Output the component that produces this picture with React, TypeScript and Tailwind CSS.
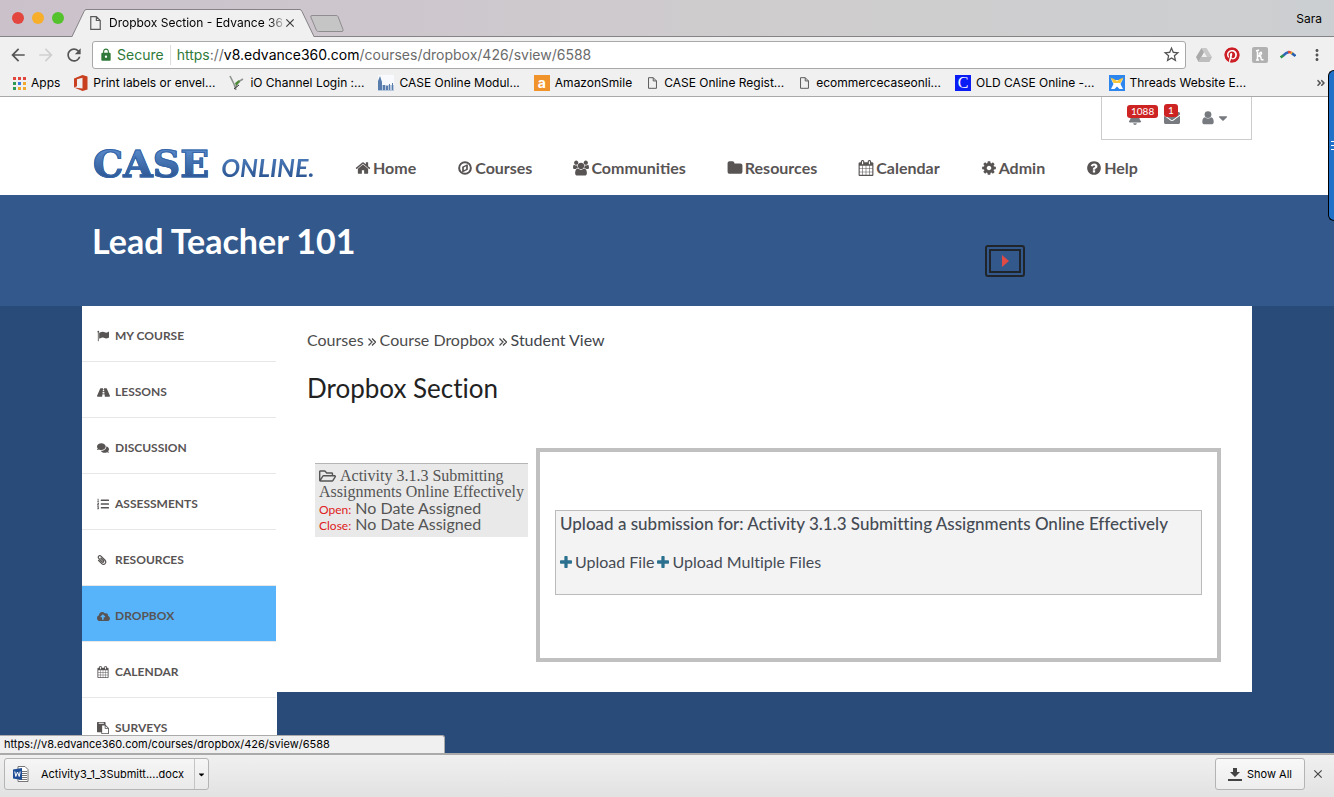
import type { ReactNode } from 'react'
import { clsx } from 'clsx'
import {
    FaAngleDoubleRight, FaBell, FaCaretDown, FaCloudUploadAlt, FaComments, FaEnvelope,
    FaListOl, FaPaperclip, FaPinterest, FaRegFolderOpen, FaRoad,
} from 'react-icons/fa'
import { MdArrowBack, MdArrowForward, MdClose, MdLock, MdMoreVert, MdRefresh, MdStarBorder } from 'react-icons/md'

interface GlyphProps {
    d: string;
    className?: string;
    box?: string;
}

function Glyph({ d, className, box = '0 0 1792 1792' }: GlyphProps) {
    return (
        <svg viewBox={box} fill="currentColor" aria-hidden="true" className={clsx('shrink-0', className)}>
            <path fillRule="evenodd" d={d} />
        </svg>
    )
}

const glyphs = {
    home: 'M1472 992v480q0 26-19 45t-45 19h-384v-384h-256v384h-384q-26 0-45-19t-19-45v-480q0-1 .5-3t.5-3l575-474 575 474q1 2 1 6zm223-69l-62 74q-8 9-21 11h-3q-13 0-21-7l-692-577-692 577q-12 8-24 7-13-2-21-11l-62-74q-8-10-7-23.5t11-21.5l719-599q32-26 76-26t76 26l244 204v-195q0-14 9-23t23-9h192q14 0 23 9t9 23v408l219 182q10 8 11 21.5t-7 23.5z',
    compass: 'M896 128a768 768 0 1 0 0 1536a768 768 0 1 0 0-1536zm0 224a544 544 0 1 1 0 1088a544 544 0 1 1 0-1088zM1216 500v592l-512 256-128 0v-592l512-256zM768 835v306l256-128v-306z',
    users: 'M657 896q-162 5-265 128h-134q-82 0-138-40.5t-56-118.5q0-353 124-353 6 0 43.5 21t97.5 42.5 119 21.5q67 0 133-23-5 37-5 66 0 139 81 256zm1071 637q0 120-73 189.5t-194 69.5h-874q-121 0-194-69.5t-73-189.5q0-53 3.5-103.5t14-109 26.5-108.5 43-97.5 62-81 85.5-53.5 111.5-20q10 0 43 21.5t73 48 107 48 135 21.5 135-21.5 107-48 73-48 43-21.5q61 0 111.5 20t85.5 53.5 62 81 43 97.5 26.5 108.5 14 109 3.5 103.5zm-1024-1277q0 106-75 181t-181 75-181-75-75-181 75-181 181-75 181 75 75 181zm704 384q0 159-112.5 271.5t-271.5 112.5-271.5-112.5-112.5-271.5 112.5-271.5 271.5-112.5 271.5 112.5 112.5 271.5zm576 225q0 78-56 118.5t-138 40.5h-134q-103-123-265-128 81-117 81-256 0-29-5-66 66 23 133 23 59 0 119-21.5t97.5-42.5 43.5-21q124 0 124 353zm-128-609q0 106-75 181t-181 75-181-75-75-181 75-181 181-75 181 75 75 181z',
    folder: 'M1728 608v704q0 92-66 158t-158 66h-1216q-92 0-158-66t-66-158v-960q0-92 66-158t158-66h320q92 0 158 66t66 158v32h672q92 0 158 66t66 158z',
    calendar: 'M192 1664h288v-288h-288v288zm352 0h320v-288h-320v288zm-352-352h288v-320h-288v320zm352 0h320v-320h-320v320zm-352-384h288v-288h-288v288zm736 736h320v-288h-320v288zm-384-736h320v-288h-320v288zm768 736h288v-288h-288v288zm-384-352h320v-320h-320v320zm-352-864v-288q0-13-9.5-22.5t-22.5-9.5h-64q-13 0-22.5 9.5t-9.5 22.5v288q0 13 9.5 22.5t22.5 9.5h64q13 0 22.5-9.5t9.5-22.5zm736 864h288v-320h-288v320zm-384-384h320v-288h-320v288zm384 0h288v-288h-288v288zm32-480v-288q0-13-9.5-22.5t-22.5-9.5h-64q-13 0-22.5 9.5t-9.5 22.5v288q0 13 9.5 22.5t22.5 9.5h64q13 0 22.5-9.5t9.5-22.5zm384-64v1280q0 52-38 90t-90 38h-1408q-52 0-90-38t-38-90v-1280q0-52 38-90t90-38h128v-96q0-66 47-113t113-47h64q66 0 113 47t47 113v96h384v-96q0-66 47-113t113-47h64q66 0 113 47t47 113v96h128q52 0 90 38t38 90z',
    cog: 'M1152 896q0-106-75-181t-181-75-181 75-75 181 75 181 181 75 181-75 75-181zm512-109v222q0 12-8 23t-20 13l-185 28q-19 54-39 91 35 50 107 138 10 12 10 25t-9 23q-27 37-99 108t-94 71q-12 0-26-9l-138-108q-44 23-91 38-16 136-29 186-7 28-36 28h-222q-14 0-24.5-8.5t-11.5-21.5l-28-184q-49-16-90-37l-141 107q-10 9-25 9-14 0-25-11-126-114-165-168-7-10-7-23 0-12 8-23 15-21 51-66.5t54-70.5q-27-50-41-99l-183-27q-13-2-21-12.5t-8-23.5v-222q0-12 8-23t19-13l186-28q14-46 39-92-40-57-107-138-10-12-10-24 0-10 9-23 26-36 98.5-107.5t94.5-71.5q13 0 26 10l138 107q44-23 91-38 16-136 29-186 7-28 36-28h222q14 0 24.5 8.5t11.5 21.5l28 184q49 16 90 37l142-107q9-9 24-9 13 0 25 10 129 119 165 170 7 8 7 22 0 12-8 23-15 21-51 66.5t-54 70.5q26 50 41 98l183 28q13 2 21 12.5t8 23.5z',
    help: 'M1024 1376v-192q0-14-9-23t-23-9h-192q-14 0-23 9t-9 23v192q0 14 9 23t23 9h192q14 0 23-9t9-23zm256-672q0-88-55.5-163t-138.5-116-170-41q-243 0-371 213-15 24 8 42l132 100q7 6 19 6 16 0 25-12 53-68 86-92 34-24 86-24 48 0 85.5 26t37.5 59q0 38-20 61t-68 45q-63 28-115.5 86.5t-52.5 125.5v36q0 14 9 23t23 9h192q14 0 23-9t9-23q0-19 21.5-49.5t54.5-49.5q32-18 49-28.5t46-35 44.5-48 28-60.5 12.5-81zm384 192q0 209-103 385.5t-279.5 279.5-385.5 103-385.5-103-279.5-279.5-103-385.5 103-385.5 279.5-279.5 385.5-103 385.5 103 279.5 279.5 103 385.5z',
    flag: 'M320 256q0 72-64 110v1266q0 13-9.5 22.5t-22.5 9.5h-64q-13 0-22.5-9.5t-9.5-22.5v-1266q-64-38-64-110 0-53 37.5-90.5t90.5-37.5 90.5 37.5 37.5 90.5zm1472 64v763q0 25-12.5 38.5t-39.5 27.5q-215 116-369 116-61 0-123.5-22t-108.5-48-115.5-48-142.5-22q-192 0-464 146-17 9-33 9-26 0-45-19t-19-45v-742q0-32 31-55 21-14 79-43 236-120 421-120 107 0 200 29t219 88q38 19 88 19 54 0 117.5-21t110-47 88-47 54.5-21q26 0 45 19t19 45z',
    plus: 'M1600 736v192q0 40-28 68t-68 28h-416v416q0 40-28 68t-68 28h-192q-40 0-68-28t-28-68v-416h-416q-40 0-68-28t-28-68v-192q0-40 28-68t68-28h416v-416q0-40 28-68t68-28h192q40 0 68 28t28 68v416h416q40 0 68 28t28 68z',
    user: 'M896 128a384 384 0 0 1 0 768a384 384 0 0 1 0-768zM560 800q140 150 336 150t336-150c220 10 304 240 304 540 0 190-110 260-250 260h-780c-140 0-250-70-250-260 0-300 84-530 304-540z',
    paste: 'M768 1664h896v-640h-416q-40 0-68-28t-28-68v-416h-384v1152zm256-1440v-64q0-13-9.5-22.5t-22.5-9.5h-704q-13 0-22.5 9.5t-9.5 22.5v64q0 13 9.5 22.5t22.5 9.5h704q13 0 22.5-9.5t9.5-22.5zm256 672h299l-299-299v299zm512 128v672q0 40-28 68t-68 28h-960q-40 0-68-28t-28-68v-160h-544q-40 0-68-28t-28-68v-1344q0-40 28-68t68-28h1088q40 0 68 28t28 68v328q21 13 36 28l408 408q28 28 48 76t20 88z',
}

function PageIcon({ className }: { className?: string }) {
    return (
        <svg viewBox="0 0 10 13" fill="none" stroke="#5a5a5a" className={clsx('shrink-0', className)} aria-hidden="true">
            <path d="M.6.6h5.2l3.6 3.6v8.2H.6zM5.8.6v3.6h3.6" strokeWidth="1.1" />
        </svg>
    )
}

function TabStrip() {
    return (
        <div className="flex h-9 items-end bg-linear-to-r from-[#cbc1cb] via-[#cfcdce] via-60% to-[#cccfd1] pr-3">
            <div className="flex w-[72px] gap-2 self-center pl-3">
                <span className="size-3 rounded-full bg-[#e2463f]" />
                <span className="size-3 rounded-full bg-[#f6ae2b]" />
                <span className="size-3 rounded-full bg-[#54c22c]" />
            </div>
            <div className="relative z-10 -mb-px flex h-7 items-stretch">
                <svg viewBox="0 0 14 28" className="h-7 w-[14px]" aria-hidden="true">
                    <path d="M0 28L12 2.500Q13 .5 14 .5V28z" fill="#f0f0f0" />
                    <path d="M0 27.500L12 2.500Q13 .5 14 .5" fill="none" stroke="#858386" />
                </svg>
                <div className="flex w-[214px] items-center border-t border-[#858386] bg-[#f0f0f0] pl-1">
                    <PageIcon className="mr-2 h-[14px] w-[11px]" />
                    <span className="bg-linear-to-r from-black from-90% to-[#bbb] bg-clip-text text-[12px] whitespace-nowrap text-transparent">
                        Dropbox Section - Edvance 36
                    </span>
                    <button aria-label="Close tab" className="mr-1 ml-auto"><MdClose size={14} className="text-[#3c3c3c]" /></button>
                </div>
                <svg viewBox="0 0 14 28" className="h-7 w-[14px]" aria-hidden="true">
                    <path d="M0 .5Q1 .5 2 2.500L14 28H0z" fill="#f0f0f0" />
                    <path d="M0 .5Q1 .5 2 2.500L14 27.500" fill="none" stroke="#858386" />
                </svg>
            </div>
            <button aria-label="New tab" className="mb-1 -ml-1">
                <svg viewBox="0 0 34 17" className="h-[17px] w-[34px]">
                    <path d="M2 .5h24q1.500 0 2 1l5 13q.5 2-1 2H8.500q-1.500 0-2-1L.8 2Q.5.5 2 .5z" fill="#c6c5c6" stroke="#8e8c8e" />
                </svg>
            </button>
            <button className="mb-2 ml-auto text-[12px] leading-[18px]">Sara</button>
        </div>
    )
}

function Toolbar() {
    return (
        <div className="flex h-9 items-center gap-1 border-t border-[#858386] bg-[#f0f0f0] pt-1 pr-2 pb-[3px] pl-2 text-[#555]">
            <button aria-label="Back" className="w-6"><MdArrowBack size={20} /></button>
            <button aria-label="Forward" className="w-6 text-[#cfcfcf]"><MdArrowForward size={20} /></button>
            <button aria-label="Reload" className="w-6"><MdRefresh size={20} /></button>
            <div className="flex h-7 grow items-center rounded-[3px] border border-[#a8a8a8] bg-white pr-1 pl-[6px]">
                <MdLock size={14} className="text-[#2f7a3a]" />
                <span className="ml-1 text-[14px] text-[#2f7a3a]">Secure</span>
                <span className="mx-[6px] h-5 w-px bg-[#ddd]" />
                <span className="grow text-[14px] whitespace-nowrap text-[#6b6b6b]">
                    <span className="text-[#2f7a3a]">https</span>://<span className="text-black">v8.edvance360.com</span>/courses/dropbox/426/sview/6588
                </span>
                <button aria-label="Bookmark this page"><MdStarBorder size={19} /></button>
            </div>
            <div className="ml-[6px] flex items-center gap-3">
                <svg viewBox="0 0 16 14" className="h-[14px] w-4" aria-hidden="true">
                    <path d="M5.500 0h5L16 9h-5z" fill="#c9c9c9" />
                    <path d="M5.500 0L0 9l2.500 5L8 4.300z" fill="#a9a9a9" />
                    <path d="M5 9h11l-2.600 5H2.500z" fill="#bdbdbd" />
                </svg>
                <FaPinterest size={16} className="rounded-full bg-white text-[#cb2027]" />
                <svg viewBox="0 0 16 16" className="size-4" aria-hidden="true">
                    <rect width="16" height="16" rx="2" fill="#b1b1b1" />
                    <path d="M5.500 3v10M4 4l3-1M4 13h3M6 9q4-1 3.500-3T7 7.500M6.500 9.500q2.500-1 2.500 1.500t2.500 1.500" fill="none" stroke="#fff" strokeWidth="1.500" />
                </svg>
                <svg viewBox="0 0 16 9" className="h-[9px] w-4" fill="none" strokeWidth="2.600" aria-hidden="true">
                    <path d="M.6 7.500L4 5" stroke="#2f8f4e" />
                    <path d="M3.500 5.300Q6 2.500 9 2" stroke="#3366bb" />
                    <path d="M8 2.200q2-.6 3.500 1" stroke="#e0483c" />
                    <path d="M11 2.600L12.500 3.800" stroke="#f0b429" />
                    <path d="M12 3.400L15.500 6" stroke="#285fae" />
                </svg>
                <button aria-label="Menu"><MdMoreVert size={18} /></button>
            </div>
        </div>
    )
}

const bookmarks: { label: string; icon: ReactNode }[] = [
    {
        label: 'Apps',
        icon: (
            <span className="grid grid-cols-3 gap-[2px]">
                {['bg-[#e2463f]', 'bg-[#e2463f]', 'bg-[#e2463f]', 'bg-[#2f9a54]', 'bg-[#3779e0]', 'bg-[#f2a72e]', 'bg-[#2f9a54]', 'bg-[#f2a72e]', 'bg-[#f2a72e]'].map((color, i) => (
                    <span key={i} className={clsx('size-[3px]', color)} />
                ))}
            </span>
        ),
    },
    {
        label: 'Print labels or envel...',
        icon: (
            <svg viewBox="0 0 14 16" className="h-4 w-[14px]" aria-hidden="true">
                <path d="M0 3.500L8.500 0 13.500 1.500v13L8.500 16 0 12.500l8.500 1V2.800L3 4.200v7L0 12.500z" fill="#c8401f" />
            </svg>
        ),
    },
    {
        label: 'iO Channel Login :...',
        icon: (
            <svg viewBox="0 0 16 16" className="size-4" fill="none" aria-hidden="true">
                <path d="M1 1l4 8 2 6M14 4l-5 3-3 7" stroke="#8d938d" strokeWidth="1.600" />
                <path d="M6 8l4-3 1 2-4 4z" fill="#4f8a3a" />
                <path d="M5 14l5-4" stroke="#333" />
            </svg>
        ),
    },
    {
        label: 'CASE Online Modul...',
        icon: (
            <svg viewBox="0 0 16 16" className="size-4" aria-hidden="true">
                <path d="M0 0h16v16H0z" fill="#f8fafd" />
                <path d="M0 10h16v6H0z" fill="#b7c8de" />
                <path d="M0 15V6l2-5 2 6v8zM5 15v-5h2v5zM8 15v-4h2v4zM11 15V9h1v6zM14 15V8h1v7z" fill="#587dad" />
            </svg>
        ),
    },
    {
        label: 'AmazonSmile',
        icon: (
            <span className="flex size-4 items-center justify-center bg-[#f0932b] text-[14px] leading-3 font-bold text-white">a</span>
        ),
    },
    { label: 'CASE Online Regist...', icon: <PageIcon className="mx-[2px] h-3 w-[9px]" /> },
    { label: 'ecommercecaseonli...', icon: <PageIcon className="mx-[2px] h-3 w-[9px]" /> },
    {
        label: 'OLD CASE Online -...',
        icon: (
            <span className="flex size-4 items-center justify-center bg-[#0a1cf5] font-['Liberation_Serif',serif] text-[16px] leading-4 text-white">C</span>
        ),
    },
    {
        label: 'Threads Website E...',
        icon: (
            <svg viewBox="0 0 16 16" className="size-4" aria-hidden="true">
                <path d="M0 0h16v16H0z" fill="#2c86ee" />
                <path d="M2 4l3 1h6l3-1-2.500 5L14 14h-3.500L8 11.500 5.500 14H2l2.500-5z" fill="#fff" />
                <path d="M1.500 2.500L5 4l3 2 3-2 3.500-1.500L11.500 8h-7z" fill="#f6c63c" />
            </svg>
        ),
    },
]

function BookmarkBar() {
    return (
        <nav aria-label="Bookmarks" className="flex h-[25px] items-center gap-[14px] border-b border-[#a9a9a9] bg-[#f0f0f0] pr-2 pb-px pl-[13px]">
            {bookmarks.map((b) => (
                <a key={b.label} href="#" className="flex items-center gap-[5px] text-[12px] leading-4 whitespace-nowrap text-black">
                    {b.icon}
                    {b.label}
                </a>
            ))}
            <button aria-label="More bookmarks" className="ml-auto text-[#555]"><FaAngleDoubleRight size={10} /></button>
        </nav>
    )
}

const navItems = [
    { label: 'Home', glyph: glyphs.home },
    { label: 'Courses', glyph: glyphs.compass },
    { label: 'Communities', glyph: glyphs.users },
    { label: 'Resources', glyph: glyphs.folder },
    { label: 'Calendar', glyph: glyphs.calendar },
    { label: 'Admin', glyph: glyphs.cog },
    { label: 'Help', glyph: glyphs.help },
]

function SiteHeader() {
    return (
        <header className="bg-white">
            <div className="mx-auto w-full max-w-[1170px]">
                <div className="ml-auto flex h-[43px] w-[151px] items-center border border-t-0 border-[#ccc] pl-[26px] text-[#777b80]">
                    <button aria-label="Notifications" className="relative">
                        <FaBell size={14} />
                        <span className="absolute -top-[6px] -left-px rounded-[3px] bg-[#cd2323] px-1 text-[10px] leading-[13px] text-white">1088</span>
                    </button>
                    <button aria-label="Messages" className="relative ml-[22px]">
                        <FaEnvelope size={16} />
                        <span className="absolute -top-[6px] left-0 rounded-[3px] bg-[#cd2323] px-1 text-[10px] leading-[13px] text-white">1</span>
                    </button>
                    <button aria-label="Account" className="ml-5 flex items-center">
                        <Glyph d={glyphs.user} className="size-4" />
                        <FaCaretDown size={14} />
                    </button>
                </div>
                <div className="flex h-[55px] items-center pt-[2px] pl-[11px]">
                    <a href="#" aria-label="CASE Online" className="flex w-[262px] items-baseline gap-3 bg-linear-to-b from-[#5f90d0] to-[#173f7a] bg-clip-text pb-[6px] leading-9 whitespace-nowrap text-transparent">
                        <span className="font-['DejaVu_Serif',serif] text-[38px] font-bold [-webkit-text-stroke:1px_#3565a8]">CASE</span>
                        <span className="text-[25px] font-bold italic">ONLINE.</span>
                    </a>
                    <nav className="flex gap-[41px]">
                        {navItems.map((item) => (
                            <a key={item.label} href="#" className="flex items-center gap-[2px] text-[16px] leading-6 font-bold text-[#585454]">
                                <Glyph
                                    d={item.glyph}
                                    box={item.label === 'Communities' ? '64 0 1920 1792' : undefined}
                                    className="size-4"
                                />
                                {item.label}
                            </a>
                        ))}
                    </nav>
                </div>
            </div>
        </header>
    )
}

function Banner() {
    return (
        <div className="bg-[#33588b]">
            <div className="mx-auto flex h-[111px] w-full max-w-[1170px] items-start justify-between pt-6 pl-[10px]">
                <h1 className="text-[34px] leading-[44px] font-bold text-white">Lead Teacher 101</h1>
                <button aria-label="Play" className="mt-[26px] mr-[227px] rounded-[3px] border-2 border-[#20252b] p-[2px]">
                    <span className="flex h-6 w-8 items-center justify-center border-2 border-[#20252b]">
                        <svg viewBox="0 0 7 12" className="h-3 w-[7px]" aria-hidden="true">
                            <path d="M0 0l7 6-7 6z" fill="#e04a45" />
                        </svg>
                    </span>
                </button>
            </div>
        </div>
    )
}

const sideItems: { label: string; icon: ReactNode; active?: boolean }[] = [
    { label: 'MY COURSE', icon: <Glyph d={glyphs.flag} className="size-3" /> },
    { label: 'LESSONS', icon: <FaRoad size={13} /> },
    { label: 'DISCUSSION', icon: <FaComments size={12} /> },
    { label: 'ASSESSMENTS', icon: <FaListOl size={12} /> },
    { label: 'RESOURCES', icon: <FaPaperclip size={10} className="-scale-x-100" /> },
    { label: 'DROPBOX', icon: <FaCloudUploadAlt size={13} />, active: true },
    { label: 'CALENDAR', icon: <Glyph d={glyphs.calendar} className="size-3" /> },
    { label: 'SURVEYS', icon: <Glyph d={glyphs.paste} className="size-3" /> },
]

function Sidebar() {
    return (
        <nav aria-label="Course" className="w-[195px] shrink-0 bg-white pr-px">
            {sideItems.map((item) => (
                <a
                    key={item.label}
                    href="#"
                    className={clsx(
                        'flex h-14 items-center border-b border-[#e7e7e7] pt-[6px] pl-[15px] text-[12px] font-bold text-[#585454]',
                        item.active && 'bg-[#57b4fb]',
                    )}
                >
                    <span className="w-[18px]">{item.icon}</span>
                    {item.label}
                </a>
            ))}
        </nav>
    )
}

function Chevrons() {
    return (
        <svg viewBox="0 0 8 8" className="mx-1 inline size-2" fill="none" stroke="currentColor" strokeWidth="1.300" aria-hidden="true">
            <path d="M.5.5L4 4 .5 7.500M4 .5L7.500 4 4 7.500" />
        </svg>
    )
}

function Dropbox() {
    return (
        <main className="min-w-0 grow bg-white pt-6 pr-[31px] pb-[30px] pl-[30px] [font-variant-ligatures:none]">
            <div className="text-[16px] leading-5 text-[#4c4c4c]">
                <a href="#">Courses</a><Chevrons /><a href="#">Course Dropbox</a><Chevrons /><span className="text-[#3f454b]">Student View</span>
            </div>
            <h2 className="mt-5 text-[26px] leading-9 text-[#222]">Dropbox Section</h2>
            <div className="mt-[42px] flex items-start gap-2 pl-2">
                <div className="mt-[15px] w-[213px] shrink-0 border-t border-[#b5b5b5] bg-[#e9e9e9] px-1 pt-1 pb-[5px] leading-4 text-[#555]">
                    <a href="#" className="block font-['Liberation_Serif',serif] text-[16px]">
                        <FaRegFolderOpen size={17} className="mr-1 inline h-4 align-top" />
                        Activity 3.1.3 Submitting Assignments Online Effectively
                    </a>
                    <p className="h-4 text-[16px]"><span className="text-[12px] text-[#e02020]">Open:</span> No Date Assigned</p>
                    <p className="h-4 text-[16px]"><span className="text-[12px] text-[#e02020]">Close:</span> No Date Assigned</p>
                </div>
                <section className="grow border-4 border-[#c0c0c0] px-[15px] pt-[58px] pb-[63px]">
                    <div className="border border-[#bbb] bg-[#f3f3f3] px-1 pt-px pb-[22px] text-[#454b54]">
                        <h3 className="text-[17px] leading-6 font-medium">Upload a submission for: Activity 3.1.3 Submitting Assignments Online Effectively</h3>
                        <div className="mt-4 flex gap-[3px] text-[16px] leading-5">
                            <a href="#" className="flex items-center gap-[3px]">
                                <Glyph d={glyphs.plus} box="192 128 1408 1408" className="size-3 text-[#2b708e]" />Upload File
                            </a>
                            <a href="#" className="flex items-center gap-[3px]">
                                <Glyph d={glyphs.plus} box="192 128 1408 1408" className="size-3 text-[#2b708e]" />Upload Multiple Files
                            </a>
                        </div>
                    </div>
                </section>
            </div>
        </main>
    )
}

function DownloadBar() {
    return (
        <footer className="flex h-11 shrink-0 items-center border-t-2 border-[#aaa] bg-linear-to-b from-[#f0f0f0] to-[#e2e2e2] px-1 pb-1 text-[11px] text-black">
            <div className="flex h-8 items-stretch rounded-[3px] border border-[#b4b4b4] bg-linear-to-b from-[#f6f6f6] to-[#e9e9e9]">
                <button className="flex items-center gap-3 pr-[10px] pl-2">
                    <svg viewBox="0 0 16 16" className="size-4" aria-hidden="true">
                        <path d="M5 .5h7l3 3v12H5z" fill="#fff" stroke="#777" />
                        <path d="M9 5.500h5M9 7.500h5M9 9.500h5M9 11.500h5M6 13.500h8" stroke="#777" />
                        <path d="M0 3.500L9 2v12L0 12.500z" fill="#1f4f96" />
                        <path d="M1.800 5.500l1 5 1.700-4.500 1.700 4.500 1-5" fill="none" stroke="#fff" />
                    </svg>
                    Activity3_1_3Submitt....docx
                </button>
                <button aria-label="Download options" className="w-[14px] border-l border-[#c4c4c4] pl-[2px]"><FaCaretDown size={9} /></button>
            </div>
            <button className="ml-auto flex h-8 items-center gap-[5px] rounded-[3px] border border-[#b4b4b4] bg-linear-to-b from-[#f8f8f8] to-[#ededed] px-3">
                <svg viewBox="0 0 14 13" className="h-[13px] w-[14px]" fill="#444" aria-hidden="true">
                    <path d="M5 0h4v4h3L7 9 2 4h3zM0 11h14v2H0z" />
                </svg>
                Show All
            </button>
            <button aria-label="Close downloads" className="mr-[5px] ml-[6px]"><MdClose size={14} className="text-[#444]" /></button>
        </footer>
    )
}

function App() {
    return (
        <div className="relative flex h-screen flex-col overflow-hidden font-['Inter',sans-serif]">
            <TabStrip />
            <Toolbar />
            <BookmarkBar />
            <div className="relative min-h-0 grow overflow-hidden bg-[#294b7a] font-['Lato',sans-serif]">
                <SiteHeader />
                <Banner />
                <div className="mx-auto flex w-full max-w-[1170px] items-start">
                    <Sidebar />
                    <Dropbox />
                </div>
                <div className="absolute bottom-0 left-0 w-[445px] rounded-tr-[3px] border-t border-r border-[#aaa] bg-[#f0f0f0] pl-1 font-['Inter',sans-serif] text-[11px] leading-[17px] text-black">
                    https://v8.edvance360.com/courses/dropbox/426/sview/6588
                </div>
            </div>
            <DownloadBar />
            <button aria-label="Open side panel" className="absolute top-[70px] right-0 z-20 flex h-[151px] w-[6px] flex-col items-end justify-center gap-[3px] rounded-l-md border border-r-0 border-black bg-[#2271c9]">
                <span className="h-px w-[3px] bg-white" />
                <span className="h-px w-[3px] bg-white" />
                <span className="h-px w-[3px] bg-white" />
            </button>
        </div>
    )
}

export default App
